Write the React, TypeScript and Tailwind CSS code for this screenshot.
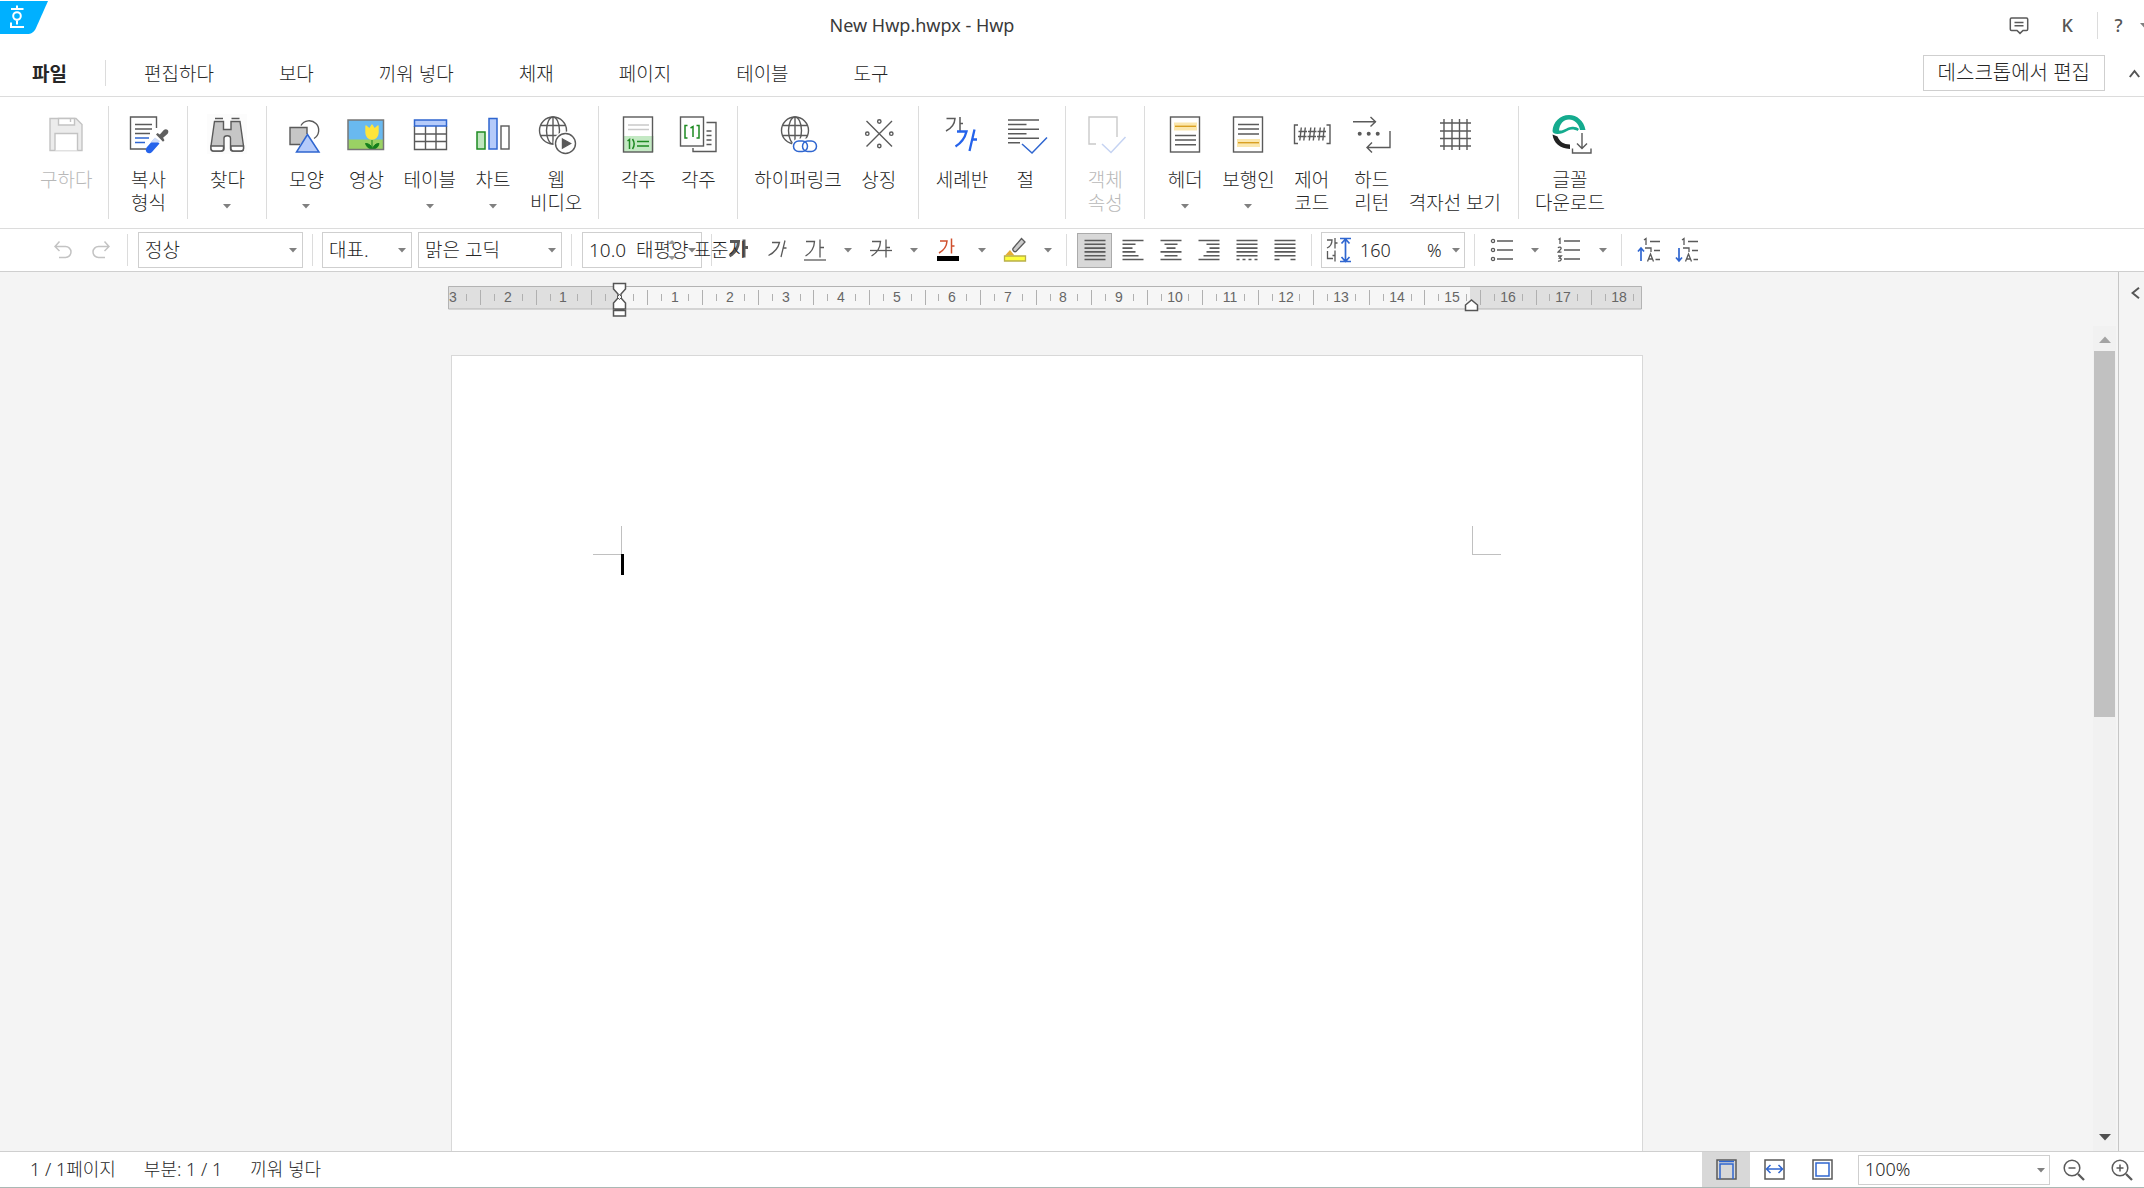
import React from "react";

const INK = "#5a5a5a";
const BLUE = "#2f66d0";

/* ---------- small shared pieces ---------- */

function Arrow({ className = "" }: { className?: string }) {
  return (
    <svg width="8" height="5" viewBox="0 0 8 5" className={className} aria-hidden="true">
      <path d="M0 0h8L4 4.5z" fill="#808080" />
    </svg>
  );
}

function Separator({ className = "" }: { className?: string }) {
  return <div className={"h-8 w-px shrink-0 bg-[#dcdcdc] " + className} />;
}

function Icon({ children, className = "" }: { children: React.ReactNode; className?: string }) {
  return (
    <svg
      width="40"
      height="40"
      viewBox="0 0 40 40"
      fill="none"
      stroke={INK}
      strokeWidth="1.4"
      className={"shrink-0 overflow-visible " + className}
      aria-hidden="true"
    >
      {children}
    </svg>
  );
}

/* ---------- ribbon icons ---------- */

const SaveIcon = () => (
  <Icon>
    <g stroke="#c3c3c3">
      <path d="M4 4.500h26l6 6v26H4z" fill="#ececec" />
      <path d="M12.500 4.500h16v6.500h-16zM9 36.500V19.500h22.500v17" fill="#fff" />
      <path d="M24.500 4.500v3.500" />
    </g>
  </Icon>
);

const CopyFormatIcon = () => (
  <Icon>
    <path d="M28.500 14V3H2.500v32H18" />
    <path d="M7 10.500h17M7 15h17M7 19.500h15" />
    <path d="M7 24h14M7 28.500h10" stroke={BLUE} strokeWidth="1.500" />
    <path d="M26.500 24.500l5 5-7.500 8.500c-1.500 1.700-4 1.500-5.300.3-1.300-1.300-1.200-3.600.3-5.200z" fill="#2563eb" stroke="none" />
    <path d="M27 23.500l-4.500 5h8.500l1-1.500z" fill="#cfdcf8" stroke="none" />
    <path d="M28 20.500l1.500-1.500 2.300 1.500 4-4.500c1.300-1.200 3-.9 3.900 0 .9 1 .9 2.600-.3 3.900l-4.300 3.900 1.400 2.400-1.500 1.500z" fill="#5f5f5f" stroke="none" />
  </Icon>
);

const FindIcon = () => (
  <Icon className="bg-[#fcfcfc]">
    <path d="M8 4.500h8M24.500 4.500h8" />
    <path d="M7.500 7.500h9v8h7.500v-8h9l3.500 24.500v2.500c0 1.500-1 2.500-2.500 2.500h-8c-1.500 0-2.500-1-2.500-2.500V24c0-3-6.500-3-6.500 0v10.500c0 1.500-1 2.500-2.500 2.500h-8C5 37 4 36 4 34.500V32z" fill="#c6c6c6" />
    <path d="M4 32h12.500v2.500c0 1.500-1 2.500-2.500 2.500H6.500C5 37 4 36 4 34.500zM24 32h12.500v2.500c0 1.500-1 2.500-2.500 2.500h-7.500c-1.500 0-2.500-1-2.500-2.500z" fill="#fff" />
  </Icon>
);

const ShapeIcon = () => (
  <Icon>
    <path d="M4 13.500h17V21l-5 9H4z" fill="#c6c6c6" stroke="none" />
    <path d="M21 20v-6.500H4v17h10" />
    <path d="M15 11.500A9.500 9.500 0 1 1 28 24.500" />
    <path d="M21.500 20.500L33 38H10.500z" fill="#b5cbfa" stroke={BLUE} strokeWidth="1.500" />
  </Icon>
);

const ImageIcon = () => (
  <Icon>
    <path d="M2 6h36v20H2z" fill="#69b9f0" stroke="none" />
    <path d="M2 25.500h36v10H2z" fill="#9ad264" stroke="none" />
    <path d="M26 26v9M26.500 35c-4 0-6-2.500-7-5.500 3.500 0 6 2 7 5.500 1-3.500 3-5.500 6.500-5.500-.5 3-2.500 5.500-6.500 5.500z" fill="#14801c" stroke="#14801c" strokeWidth="1" />
    <path d="M20 12l3.500 3 2.500-4 2.500 4 3.500-3v6.500c0 4-2.500 6.500-6 6.500s-6-2.500-6-6.500z" fill="#ffe53b" stroke="#ffe53b" strokeLinejoin="round" />
    <rect x="2" y="6" width="35.500" height="29.500" stroke="#777" strokeWidth="1.500" />
  </Icon>
);

const TableIcon = () => (
  <Icon>
    <path d="M4.500 12v23.500h32V12M15.500 12v23.500M26 12v23.500M4.500 20h32M4.500 27.500h32" />
    <rect x="4.500" y="6" width="32" height="6" fill="#b5cbfa" stroke={BLUE} strokeWidth="1.500" />
  </Icon>
);

const ChartIcon = () => (
  <Icon>
    <rect x="4" y="18" width="8" height="17" fill="#bfe6bf" stroke="#1e8a22" strokeWidth="1.500" />
    <rect x="16" y="4.500" width="8" height="30.500" fill="#b5cbfa" stroke={BLUE} strokeWidth="1.500" />
    <rect x="28" y="12" width="8" height="23" fill="#fff" />
  </Icon>
);

const Globe = () => (
  <>
    <circle cx="17" cy="16.500" r="13.500" />
    <ellipse cx="17" cy="16.500" rx="6.500" ry="13.500" />
    <path d="M17 3v27M5 11.500h24M5 21.500h24" />
  </>
);

const WebVideoIcon = () => (
  <Icon>
    <Globe />
    <circle cx="29.500" cy="29.500" r="12" fill="#fff" stroke="none" />
    <circle cx="29.500" cy="29.500" r="10" fill="#fff" />
    <path d="M26.500 25l8 4.500-8 4.500z" fill={INK} />
  </Icon>
);

const FootnoteIcon = () => (
  <Icon>
    <path d="M5.500 22h30v16h-30z" fill="#c4e9c4" stroke="none" />
    <rect x="5.500" y="3" width="29" height="35" />
    <path d="M10 11h21M10 15.500h21" stroke="#c9c9c9" />
    <path d="M9.500 27l2-1.500V35M14.500 25c2 3 2 7 0 10M19 27.500h12M19 32h12" stroke="#1e8a22" strokeWidth="1.500" />
  </Icon>
);

const EndnoteIcon = () => (
  <Icon>
    <path d="M28.500 8.500H38v29H15V34" />
    <path d="M28.500 17h5M28.500 21.500h5M28.500 26h5M28.500 30.500h5" />
    <rect x="2.500" y="3" width="23" height="29" fill="#fff" />
    <path d="M9.500 11.500h-2.500v12.500h2.500M18.500 11.500h2.500v12.500h-2.500M12.500 14l2.500-1.500V23" stroke="#1e8a22" strokeWidth="1.500" />
  </Icon>
);

const HyperlinkIcon = () => (
  <Icon>
    <Globe />
    <rect x="14" y="24.500" width="26" height="15" rx="7" fill="#fff" stroke="none" />
    <g stroke={BLUE} strokeWidth="1.500">
      <rect x="15.500" y="27" width="14" height="10.500" rx="5.200" />
      <rect x="24.500" y="27" width="14" height="10.500" rx="5.200" />
    </g>
  </Icon>
);

const SymbolIcon = () => (
  <Icon>
    <path d="M7.500 7l25.500 25.500M33 7L7.500 32.500" />
    <circle cx="20.300" cy="7.500" r="1.700" />
    <circle cx="20.300" cy="32" r="1.700" />
    <circle cx="8.300" cy="19.700" r="1.700" />
    <circle cx="32.300" cy="19.700" r="1.700" />
  </Icon>
);

const FontIcon = () => (
  <Icon>
    <path d="M4.500 4.500h8.500c-.3 5-3 9.500-9 12.500M18 3v14M18 9.500h3" strokeWidth="1.500" />
    <path d="M15 17.500h9.500c-1.500 6-4.500 11-11 15M32.500 15.500l-5 21.500M30.500 25.500h4.500" stroke="#2563eb" strokeWidth="2.300" />
  </Icon>
);

const ParagraphIcon = () => (
  <Icon>
    <path d="M3 6h31M3 10.500h18.500M3 15.200h31M3 19.700h18.500M3 24.300h31M3 28.800h12" />
    <path d="M17 30l10 9 15-15.500" stroke={BLUE} strokeWidth="1.500" />
  </Icon>
);

const ObjectIcon = () => (
  <Icon>
    <path d="M11 30H4V3h28v20" stroke="#c9c9c9" />
    <path d="M17 30l9 8.500 14.500-15.500" stroke="#c5d3f2" strokeWidth="1.500" />
  </Icon>
);

const HeaderIcon = () => (
  <Icon>
    <rect x="5.500" y="3" width="29" height="35" />
    <path d="M9 8.500h23v8H9z" fill="#fbe7ad" stroke="none" />
    <path d="M10 12.300h21" stroke="#d9a022" />
    <path d="M10 21.500h21M10 26h21M10 30.700h21" />
  </Icon>
);

const FooterIcon = () => (
  <Icon>
    <rect x="5.500" y="3" width="29" height="35" />
    <path d="M9 25h23v8H9z" fill="#fbe7ad" stroke="none" />
    <path d="M10 28.700h21" stroke="#d9a022" />
    <path d="M10 10.500h21M10 15h21M10 20h21" />
  </Icon>
);

const ControlCodeIcon = () => (
  <Icon>
    <path d="M6 11H2.500v18.500H6M34.500 11H38v18.500h-3.500" />
    <path d="M9.300 13.500l-1.500 13M13.300 13.500l-1.500 13M6.500 17.500h8.500M6 22.500h8.500M18.800 13.500l-1.500 13M22.800 13.500l-1.500 13M16 17.500h8.500M15.500 22.500h8.500M28.300 13.500l-1.500 13M32.300 13.500l-1.500 13M25.500 17.500h8.500M25 22.500h8.500" />
  </Icon>
);

const HardReturnIcon = () => (
  <Icon>
    <path d="M1 7.800h23M18.500 3l5 4.800-5 4.800M38 17v16.500H15M20 28.500l-5 5 5 5" />
    <g fill={INK} stroke="none">
      <circle cx="7.700" cy="19.700" r="2" />
      <circle cx="16.700" cy="19.700" r="2" />
      <circle cx="25.700" cy="19.700" r="2" />
    </g>
  </Icon>
);

const GridIcon = () => (
  <Icon>
    <path d="M9 5v31M17 5v31M24.500 5v31M32 5v31M5 9h31M5 17h31M5 24.500h31M5 32h31" />
  </Icon>
);

const FontDownloadIcon = () => (
  <Icon>
    <path
      d="M35.500 16C34 7 27 1 19 1 10 1 3 8 2.500 17c0 2 2 3 5 3 8 0 9-4.500 14.500-4.500 2 0 4 .5 5.500 1.500l1.500-2c-2-2-5-2.500-8-2-5.500.8-6.500 4-12 3.500C9.500 10 13.500 5.500 19 5.500c5.500 0 10 4.500 11 10.500z"
      fill="#14ab8e"
      stroke="none"
    />
    <path d="M2.500 20.500l5 2c2 5 6 8 12.500 8v4.500C10 34.500 3.500 29 2.500 20.500z" fill="#222" stroke="none" />
    <path d="M32 19v15.500M27 29.500l5 5 5-5M22.500 34.500V39H41v-4.500" />
  </Icon>
);

/* ---------- ribbon ---------- */

type Tool = { icon: React.FC; lines: string[]; menu?: boolean; disabled?: boolean };
type Group = { roomy?: boolean; tools: Tool[] };

const ribbonGroups: Group[] = [
  { tools: [{ icon: SaveIcon, lines: ["구하다"], disabled: true }] },
  { tools: [{ icon: CopyFormatIcon, lines: ["복사", "형식"] }] },
  { tools: [{ icon: FindIcon, lines: ["찾다"], menu: true }] },
  {
    tools: [
      { icon: ShapeIcon, lines: ["모양"], menu: true },
      { icon: ImageIcon, lines: ["영상"] },
      { icon: TableIcon, lines: ["테이블"], menu: true },
      { icon: ChartIcon, lines: ["차트"], menu: true },
      { icon: WebVideoIcon, lines: ["웹", "비디오"] },
    ],
  },
  {
    tools: [
      { icon: FootnoteIcon, lines: ["각주"] },
      { icon: EndnoteIcon, lines: ["각주"] },
    ],
  },
  {
    tools: [
      { icon: HyperlinkIcon, lines: ["하이퍼링크"] },
      { icon: SymbolIcon, lines: ["상징"] },
    ],
  },
  {
    roomy: true,
    tools: [
      { icon: FontIcon, lines: ["세례반"] },
      { icon: ParagraphIcon, lines: ["절"] },
    ],
  },
  { tools: [{ icon: ObjectIcon, lines: ["객체", "속성"], disabled: true }] },
  {
    roomy: true,
    tools: [
      { icon: HeaderIcon, lines: ["헤더"], menu: true },
      { icon: FooterIcon, lines: ["보행인"], menu: true },
      { icon: ControlCodeIcon, lines: ["제어", "코드"] },
      { icon: HardReturnIcon, lines: ["하드", "리턴"] },
      { icon: GridIcon, lines: ["", "격자선 보기"] },
    ],
  },
  { tools: [{ icon: FontDownloadIcon, lines: ["글꼴", "다운로드"] }] },
];

function RibbonButton({ tool }: { tool: Tool }) {
  const ToolIcon = tool.icon;
  return (
    <button
      type="button"
      disabled={tool.disabled}
      className="flex min-w-[60px] flex-col items-center px-[7px] pt-2 whitespace-nowrap disabled:text-[#b8b8b8]"
    >
      <ToolIcon />
      <span className="mt-[15px] flex flex-col items-center leading-[23px]">
        {tool.lines.map((line, i) => (
          <span key={i} className="h-[23px]">
            {line}
          </span>
        ))}
      </span>
      {tool.menu && <Arrow className="mt-3" />}
    </button>
  );
}

/* ---------- formatting bar ---------- */

function BarButton({ label, children, className = "w-[38px]" }: { label: string; children: React.ReactNode; className?: string }) {
  return (
    <button type="button" aria-label={label} className={"flex h-[35px] shrink-0 items-center justify-center " + className}>
      {children}
    </button>
  );
}

function BarSelect({ label, value, className }: { label: string; value: string; className: string }) {
  return (
    <div className={"relative h-[36px] shrink-0 border border-[#cfcfcf] " + className}>
      <select aria-label={label} className="h-full w-full appearance-none bg-transparent pl-[6px] outline-none">
        <option>{value}</option>
      </select>
      <Arrow className="pointer-events-none absolute top-[15px] right-[5px]" />
    </div>
  );
}

function Small({ children, w = 24 }: { children: React.ReactNode; w?: number }) {
  return (
    <svg width={w} height="26" viewBox={`0 0 ${w} 26`} fill="none" stroke={INK} strokeWidth="1.300" aria-hidden="true">
      {children}
    </svg>
  );
}

const GA = "M3 4.500h8.500c-.3 6-3 11-9 14.500M17 2.500v18M17 10.500h4";

const alignments = [
  { label: "양쪽 정렬", d: "M1.500 3.500h21M1.500 7.300h21M1.500 11.100h21M1.500 14.900h21M1.500 18.700h21M1.500 22.500h21", active: true },
  { label: "왼쪽 정렬", d: "M1.500 3.500h21M1.500 7.300h13M1.500 11.100h10M1.500 14.900h13M1.500 18.700h16M1.500 22.500h21" },
  { label: "가운데 정렬", d: "M1.500 3.500h21M5.500 7.300h13M7.500 11.100h9M1.500 14.900h21M5.500 18.700h13M1.500 22.500h21" },
  { label: "오른쪽 정렬", d: "M1.500 3.500h21M9.500 7.300h13M12.500 11.100h10M9.500 14.900h13M6.500 18.700h16M1.500 22.500h21" },
  { label: "배분 정렬", d: "M1.500 3.500h21M1.500 7.300h21M1.500 11.100h21M1.500 14.900h21M1.500 18.700h21M1.500 22.500h3M7.500 22.500h3M13.500 22.500h3M19.500 22.500h3" },
  { label: "나눔 정렬", d: "M1.500 3.500h21M1.500 7.300h21M1.500 11.100h21M1.500 14.900h21M1.500 18.700h21M1.500 22.500h5M17.500 22.500h5" },
];

function LevelIcon({ up }: { up?: boolean }) {
  return (
    <Small>
      <path d="M7 3l2-1.500V8M13 4.500h10M8 11h6v4M17 13.500h6M10.500 24.500l3-7.500 3 7.500M11.500 22h4M18.500 22.500h4.500" />
      <path d={up ? "M4 24V11M1 14.500l3-3.500 3 3.500" : "M4 11v13M1 20.500l3 3.500 3-3.500"} stroke={BLUE} strokeWidth="1.700" />
    </Small>
  );
}

function FormatBar() {
  return (
    <div className="flex h-[43px] shrink-0 items-center overflow-hidden border-b border-[#cfcfcf] pl-11 text-[19px]">
      <BarButton label="실행 취소">
        <svg width="18" height="18" viewBox="0 0 18 18" fill="none" stroke="#c3c3c3" strokeWidth="1.500" aria-hidden="true">
          <path d="M5.500.5L1 5.500l4.500 4.500M1 5.500h10.500a5.500 5.500 0 0 1 0 11H5" />
        </svg>
      </BarButton>
      <BarButton label="다시 실행">
        <svg width="18" height="18" viewBox="0 0 18 18" fill="none" stroke="#c3c3c3" strokeWidth="1.500" aria-hidden="true">
          <path d="M12.500.5L17 5.500l-4.500 4.500M17 5.500H6.500a5.500 5.500 0 0 0 0 11H13" />
        </svg>
      </BarButton>
      <Separator className="ml-[7px]" />
      <BarSelect label="스타일" value="정상" className="ml-[10px] w-[165px]" />
      <Separator className="ml-[9px]" />
      <BarSelect label="언어" value="대표." className="ml-[9px] w-[90px]" />
      <BarSelect label="글꼴" value="맑은 고딕" className="ml-[6px] w-[144px]" />
      <Separator className="ml-[9px]" />
      <div className="relative ml-[10px] flex h-[36px] w-[120px] shrink-0 items-center border border-[#cfcfcf]">
        <input
          aria-label="글자 크기"
          defaultValue="10.0  태평양 표준시"
          className="w-[180px] shrink-0 bg-transparent pl-[6px] outline-none"
        />
        <svg width="8" height="20" viewBox="0 0 8 20" className="absolute right-[25px]" aria-hidden="true">
          <path d="M0 4h8L4 0zM0 16h8l-4 4z" fill="#999" />
        </svg>
        <Arrow className="absolute right-[5px]" />
      </div>
      <Separator className="ml-[9px]" />
      <BarButton label="진하게" className="ml-2 w-[38px]">
        <Small>
          <path d={GA} strokeWidth="3" />
        </Small>
      </BarButton>
      <BarButton label="기울임">
        <Small>
          <path d="M7 5.500h7.500c-1.300 5.500-5 10-11 13M20 3.500l-4 16.500M18.500 11h3" />
        </Small>
      </BarButton>
      <BarButton label="밑줄">
        <Small>
          <path d={GA} />
          <path d="M1 23h22" />
        </Small>
      </BarButton>
      <BarButton label="밑줄 모양" className="w-7">
        <Arrow />
      </BarButton>
      <BarButton label="취소선">
        <Small>
          <path d={GA} />
          <path d="M1 13.500h22" />
        </Small>
      </BarButton>
      <BarButton label="취소선 모양" className="w-7">
        <Arrow />
      </BarButton>
      <BarButton label="글자 색" className="w-10">
        <Small>
          <path d="M4 4h7c-.3 5-2.500 9-8 12M15.500 1.500v15M15.500 9h3" stroke="#d0502e" strokeWidth="1.500" />
          <path d="M1 19h22v5H1z" fill="#000" stroke="none" />
        </Small>
      </BarButton>
      <BarButton label="글자 색 선택" className="w-7">
        <Arrow />
      </BarButton>
      <BarButton label="형광펜">
        <Small>
          <path d="M18.500 1.500l3.500 3.500-9 9.500c-1.500 1-4-1.500-3-3z" fill="#ccc" />
          <path d="M2 18.500l5-5.500 4.500 5.500z" fill="#e5ad35" stroke="none" />
          <path d="M1.500 19h21v5h-21z" fill="#ffff3c" stroke="#b9b04a" />
        </Small>
      </BarButton>
      <BarButton label="형광펜 색 선택" className="w-7">
        <Arrow />
      </BarButton>
      <Separator className="ml-1" />
      <div className="ml-[10px] flex shrink-0 gap-[3px]">
        {alignments.map((a) => (
          <BarButton key={a.label} label={a.label} className={a.active ? "w-[35px] border border-[#ababab] bg-[#d8d8d8]" : "w-[35px]"}>
            <Small>
              <path d={a.d} strokeWidth="1.600" />
            </Small>
          </BarButton>
        ))}
      </div>
      <Separator className="ml-[9px]" />
      <div className="relative ml-[9px] flex h-[36px] w-[144px] shrink-0 items-center border border-[#cfcfcf] pl-1 text-[18px]">
        <Small w={26}>
          <path d="M1 3h5c0 4-1.500 6.500-5 8M9 1v10.500M9 6h2.500M1.500 14v7.500h5.500M9 13.500v11M6.500 18.500h2.500" />
          <path d="M14 1.500h11M14 24.500h11M19.500 2v22.500M15.500 6.500l4-4.500 4 4.500M15.500 20l4 4.500 4-4.500" stroke={BLUE} strokeWidth="1.700" />
        </Small>
        <input aria-label="줄 간격" defaultValue="160" className="ml-2 w-[67px] bg-transparent outline-none" />
        <span>%</span>
        <Arrow className="absolute right-[4px]" />
      </div>
      <Separator className="ml-[9px]" />
      <BarButton label="글머리표" className="ml-2 w-[38px]">
        <Small>
          <circle cx="3" cy="4" r="1.600" />
          <circle cx="3" cy="13" r="1.600" />
          <circle cx="3" cy="22" r="1.600" />
          <path d="M7 4h16M7 13h16M7 22h16" />
        </Small>
      </BarButton>
      <BarButton label="글머리표 모양" className="w-7">
        <Arrow />
      </BarButton>
      <BarButton label="번호 매기기" className="w-10">
        <Small>
          <path d="M1.500 2.500L3 1.500V7M1 11c1-1.500 3.500-1 3 .8-.3 1-2 2-3 3.400h3.500M1 19h3.300l-1.800 2c2.500 0 2.500 3.500-1.500 3.200M7 4h16M7 13h16M7 22h16" />
        </Small>
      </BarButton>
      <BarButton label="번호 모양" className="w-7">
        <Arrow />
      </BarButton>
      <Separator className="ml-1" />
      <BarButton label="한 수준 증가" className="ml-2 w-[38px]">
        <LevelIcon up />
      </BarButton>
      <BarButton label="한 수준 감소">
        <LevelIcon />
      </BarButton>
    </div>
  );
}

/* ---------- ruler ---------- */

const RULER_ZERO = 171;
const CM = 55.55;

function Ruler() {
  const quarters = Array.from({ length: 86 }, (_, i) => i - 12);
  return (
    <svg width="1194" height="38" viewBox="0 0 1194 38" className="block overflow-visible" role="img" aria-label="눈금자">
      <path d="M0 7h1194v23H0z" fill="#f6f6f6" />
      <path d="M0 7h170v23H0zM1022 7h172v23h-172z" fill="#dfdfdf" />
      <path d="M.5 7.500h1193v22.500H.5z" fill="none" stroke="#b3b3b3" />
      {quarters.map((q) => {
        const x = Math.round(RULER_ZERO + (q * CM) / 4);
        if (x < 8 || x > 1190) return null;
        if (q % 4 === 0) {
          const n = Math.abs(q / 4);
          if (n === 0) return null;
          return (
            <text key={q} x={x} y="23" textAnchor="middle" fontSize="14" fill="#666" fontFamily="Liberation Sans" fontWeight="400">
              {n}
            </text>
          );
        }
        return <path key={q} d={q % 2 === 0 ? `M${x + 0.5} 11v15` : `M${x + 0.5} 15v7`} stroke="#b0b0b0" />;
      })}
      <text x="5" y="23" textAnchor="middle" fontSize="14" fill="#666" fontFamily="Liberation Sans" fontWeight="400">
        3
      </text>
      <g fill="#fff" stroke="#555" strokeWidth="1.500">
        <path d="M165.500 4.500h12v5.500l-4.500 5v4l4.500 5v6h-12v-6l4.500-5v-4l-4.500-5z" />
        <path d="M165.500 31.500h12v5.500h-12z" />
        <path d="M1017.500 31.500v-5.500l6-5 6 5v5.500z" />
      </g>
      <path d="M167 31h9" stroke="#555" strokeWidth="1.500" />
      <path d="M171.500 15.500l2.500 2.500-2.500 2.500-2.500-2.500z" fill="#f6f6f6" stroke="#555" />
    </svg>
  );
}

/* ---------- page ---------- */

const tabs = ["편집하다", "보다", "끼워 넣다", "체재", "페이지", "테이블", "도구"];

export default function App() {
  return (
    <div className="flex h-screen flex-col overflow-hidden border-b border-[#a9b8b4] bg-white font-['Noto_Sans','Noto_Sans_CJK_KR',sans-serif] text-[18px] font-light text-[#262626]">
      <header className="flex h-[50px] shrink-0 items-start overflow-hidden">
        <svg width="48" height="35" viewBox="0 0 48 35" className="shrink-0" aria-label="Hwp" role="img">
          <path d="M0 1h48l-12 27c-2 4-4.500 6-9 6H0z" fill="#00b0ff" />
          <g fill="none" stroke="#fff" strokeWidth="2">
            <path d="M17 5.500v3.500M11 9h12.500M17 20.500v4M11 22.500V27h13" />
            <circle cx="17" cy="16" r="3.800" />
          </g>
        </svg>
        <h1 className="min-w-0 flex-1 self-center text-center font-normal text-[#3a3a3a]">New Hwp.hwpx - Hwp</h1>
        <div className="flex h-full w-[348px] shrink-0 items-center justify-end">
          <button type="button" aria-label="의견" className="mr-[33px]">
            <svg width="20" height="19" viewBox="0 0 20 19" fill="none" stroke={INK} strokeWidth="1.500" aria-hidden="true">
              <path d="M2.500 2h15c.8 0 1.200.4 1.200 1.200v10c0 .8-.4 1.200-1.200 1.200H14l-3 3-3-3H2.500c-.8 0-1.200-.4-1.200-1.200v-10C1.300 2.400 1.700 2 2.500 2zM5.500 6.500h9M5.500 9.800h9" />
            </svg>
          </button>
          <button type="button" className="mr-6 font-medium text-[#555]">
            K
          </button>
          <Separator className="h-[27px]" />
          <button type="button" aria-label="도움말" className="mr-[17px] ml-4 flex w-[9px] justify-center font-medium text-[#555]">
            ?
          </button>
          <span className="flex w-1 shrink-0 overflow-hidden">
            <Arrow className="shrink-0" />
          </span>
        </div>
      </header>

      <nav className="flex h-[47px] shrink-0 items-center border-b border-[#dcdcdc] text-[19px]">
        <button type="button" className="ml-8 pt-[2px] font-bold">
          파일
        </button>
        <Separator className="mr-[38px] ml-[38px] h-[26px]" />
        <div className="flex flex-1 gap-[65px]">
          {tabs.map((t) => (
            <button key={t} type="button" className="pt-[2px] whitespace-nowrap">
              {t}
            </button>
          ))}
        </div>
        <button type="button" className="h-9 border border-[#cfcfcf] px-[14px] text-[20px] leading-8">
          데스크톱에서 편집
        </button>
        <button type="button" aria-label="리본 접기" className="mr-1 ml-6">
          <svg width="11" height="9" viewBox="0 0 11 9" fill="none" stroke="#555" strokeWidth="2" aria-hidden="true">
            <path d="M.8 8l4.700-6 4.700 6" />
          </svg>
        </button>
      </nav>

      <div className="flex h-[132px] shrink-0 border-b border-[#dcdcdc] py-[9px] pl-6 text-[19px]">
        {ribbonGroups.map((group, i) => (
          <div
            key={i}
            className={
              "flex border-[#dcdcdc] " + (group.roomy ? "px-[10px] " : "px-[9px] ") + (i < ribbonGroups.length - 1 ? "border-r" : "")
            }
          >
            {group.tools.map((tool, j) => (
              <RibbonButton key={j} tool={tool} />
            ))}
          </div>
        ))}
      </div>

      <FormatBar />

      <div className="flex min-h-0 flex-1 bg-[#f4f4f4]">
        <main className="flex min-w-0 flex-1 flex-col items-center overflow-hidden pt-[7px]">
          <div className="mr-1">
            <Ruler />
          </div>
          <div className="mt-[38px] flex min-h-0 w-[1192px] flex-1 flex-col border border-b-0 border-[#d8d8d8] bg-white px-[141px] pt-[170px]">
            <div className="flex justify-between">
              <div className="h-[29px] w-[29px] border-r border-b border-[#c0c0c0]" />
              <div className="h-[29px] w-[29px] border-b border-l border-[#c0c0c0]" />
            </div>
            <div className="-mt-px ml-7 h-[21px] w-[3px] bg-black" />
          </div>
        </main>
        <div className="mt-[54px] mr-[2px] flex w-[23px] shrink-0 flex-col items-center bg-[#f1f1f1]">
          <svg width="12" height="7" viewBox="0 0 12 7" className="mt-[10px] shrink-0" aria-hidden="true">
            <path d="M0 7h12L6 .5z" fill="#a3a3a3" />
          </svg>
          <div className="mt-2 h-[366px] w-[21px] shrink-0 bg-[#c1c1c1]" />
          <svg width="12" height="7" viewBox="0 0 12 7" className="mt-auto mb-[10px] shrink-0" aria-hidden="true">
            <path d="M0 0h12L6 6.500z" fill="#505050" />
          </svg>
        </div>
        <aside className="w-[26px] shrink-0 border-l border-[#c6c6c6] pt-[15px] pl-3">
          <button type="button" aria-label="작업 창 열기" className="flex">
            <svg width="9" height="12" viewBox="0 0 9 12" fill="none" stroke="#555" strokeWidth="2" aria-hidden="true">
              <path d="M8 .8L1.500 6 8 11.200" />
            </svg>
          </button>
        </aside>
      </div>

      <footer className="flex h-9 shrink-0 items-center border-t border-[#cfcfcf] whitespace-pre">
        <span className="ml-[30px]">1 / 1페이지</span>
        <span className="ml-7">부분: 1 / 1</span>
        <span className="ml-7 flex-1">끼워 넣다</span>
        <button type="button" aria-label="쪽 윤곽" className="flex h-full w-12 items-center justify-center bg-[#d8d8d8]">
          <svg width="21" height="21" viewBox="0 0 21 21" fill="none" aria-hidden="true">
            <path d="M1 1h19v19H1z" stroke={INK} strokeWidth="1.500" />
            <path d="M4 20V5h13v15M3 2.500h15" stroke={BLUE} strokeWidth="1.500" />
          </svg>
        </button>
        <button type="button" aria-label="폭 맞춤" className="flex h-full w-12 items-center justify-center">
          <svg width="21" height="21" viewBox="0 0 21 21" fill="none" aria-hidden="true">
            <path d="M1 1h19v19H1z" stroke={INK} strokeWidth="1.500" />
            <path d="M2.500 10h16M6.500 6l-4 4 4 4M14.500 6l4 4-4 4" stroke={BLUE} strokeWidth="1.500" />
          </svg>
        </button>
        <button type="button" aria-label="쪽 맞춤" className="flex h-full w-12 items-center justify-center">
          <svg width="21" height="21" viewBox="0 0 21 21" fill="none" aria-hidden="true">
            <path d="M1 1h19v19H1z" stroke={INK} strokeWidth="1.500" />
            <path d="M4 4h13v13H4z" stroke={BLUE} strokeWidth="1.500" />
          </svg>
        </button>
        <div className="relative ml-3 h-[30px] w-[192px] shrink-0 border border-[#cfcfcf]">
          <select aria-label="확대/축소" className="h-full w-full appearance-none bg-transparent pl-[6px] outline-none">
            <option>100%</option>
          </select>
          <Arrow className="pointer-events-none absolute top-3 right-1" />
        </div>
        {["축소", "확대"].map((label, i) => (
          <button key={label} type="button" aria-label={label} className={i === 0 ? "ml-[13px]" : "mr-[11px] ml-[26px]"}>
            <svg width="22" height="22" viewBox="0 0 22 22" fill="none" stroke={INK} strokeWidth="1.500" aria-hidden="true">
              <circle cx="9" cy="9" r="7.800" />
              <path d={i === 0 ? "M5.500 9h7" : "M5.500 9h7M9 5.500v7"} />
              <path d="M15 15l6 6" strokeWidth="2.300" />
            </svg>
          </button>
        ))}
      </footer>
    </div>
  );
}
